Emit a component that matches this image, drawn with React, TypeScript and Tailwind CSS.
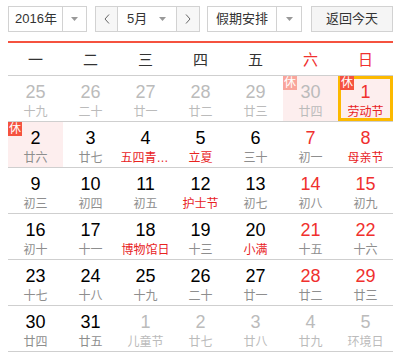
import React from "react";

type Day = {
  n: number;
  lunar: string;
  other?: boolean; // previous / next month
  weekend?: boolean;
  fest?: boolean; // red lunar text
  rest?: boolean; // 休 badge
  today?: boolean;
};

const rows: Day[][] = [
  [
    { n: 25, lunar: "十九", other: true },
    { n: 26, lunar: "二十", other: true },
    { n: 27, lunar: "廿一", other: true },
    { n: 28, lunar: "廿二", other: true },
    { n: 29, lunar: "廿三", other: true },
    { n: 30, lunar: "廿四", other: true, rest: true },
    { n: 1, lunar: "劳动节", weekend: true, fest: true, rest: true, today: true },
  ],
  [
    { n: 2, lunar: "廿六", rest: true },
    { n: 3, lunar: "廿七" },
    { n: 4, lunar: "五四青年节", fest: true },
    { n: 5, lunar: "立夏", fest: true },
    { n: 6, lunar: "三十" },
    { n: 7, lunar: "初一", weekend: true },
    { n: 8, lunar: "母亲节", weekend: true, fest: true },
  ],
  [
    { n: 9, lunar: "初三" },
    { n: 10, lunar: "初四" },
    { n: 11, lunar: "初五" },
    { n: 12, lunar: "护士节", fest: true },
    { n: 13, lunar: "初七" },
    { n: 14, lunar: "初八", weekend: true },
    { n: 15, lunar: "初九", weekend: true },
  ],
  [
    { n: 16, lunar: "初十" },
    { n: 17, lunar: "十一" },
    { n: 18, lunar: "博物馆日", fest: true },
    { n: 19, lunar: "十三" },
    { n: 20, lunar: "小满", fest: true },
    { n: 21, lunar: "十五", weekend: true },
    { n: 22, lunar: "十六", weekend: true },
  ],
  [
    { n: 23, lunar: "十七" },
    { n: 24, lunar: "十八" },
    { n: 25, lunar: "十九" },
    { n: 26, lunar: "二十" },
    { n: 27, lunar: "廿一" },
    { n: 28, lunar: "廿二", weekend: true },
    { n: 29, lunar: "廿三", weekend: true },
  ],
  [
    { n: 30, lunar: "廿四" },
    { n: 31, lunar: "廿五" },
    { n: 1, lunar: "儿童节", other: true },
    { n: 2, lunar: "廿七", other: true },
    { n: 3, lunar: "廿八", other: true },
    { n: 4, lunar: "廿九", other: true },
    { n: 5, lunar: "环境日", other: true },
  ],
];

const weekdays = ["一", "二", "三", "四", "五", "六", "日"];

const Caret = () => (
  <svg width="7" height="4" viewBox="0 0 7 4">
    <path d="M0 0h7L3.5 4z" fill="#999" />
  </svg>
);

const Chevron = ({ dir }: { dir: "l" | "r" }) => (
  <svg width="6" height="10" viewBox="0 0 6 10">
    <path
      d={dir === "l" ? "M5 0.5L1 5l4 4.5" : "M1 0.5L5 5l-4 4.5"}
      fill="none"
      stroke="#666"
      strokeWidth="1"
    />
  </svg>
);

function Cell({ d }: { d: Day }) {
  const numColor = d.other
    ? "text-[#bbb]"
    : d.weekend
    ? "text-[#f0302e]"
    : "text-black";
  const lunarColor = d.other
    ? "text-[#bbb]"
    : d.fest
    ? "text-[#e8231f]"
    : "text-[#8e8e8e]";
  return (
    <div
      className={
        "relative h-[45px] flex flex-col items-center pt-[6px] " +
        (d.rest ? "bg-[#fdeeee]" : "")
      }
    >
      {d.today && (
        <div className="absolute inset-0 border-[3px] border-[#fcb900]" />
      )}
      {d.rest && (
        <span
          className={
            "absolute top-0 w-[14px] h-[14px] flex items-center justify-center text-[12px] leading-none text-white " +
            (d.today ? "left-[2px] " : "left-0 ") +
            (d.other ? "bg-[#f9a59b]" : "bg-[#f5523f]")
          }
        >
          休
        </span>
      )}
      <span
        className={"relative text-[18px] leading-[20px] " + numColor}
        style={{ fontFamily: "Arial, 'Liberation Sans', sans-serif" }}
      >
        {d.n}
      </span>
      <span
        className={
          "relative mt-[2px] max-w-[50px] truncate text-[12px] leading-[16px] " + lunarColor
        }
      >
        {d.lunar}
      </span>
    </div>
  );
}

export default function App() {
  return (
    <div
      className="w-[398px] h-[356px] bg-white overflow-hidden pl-[8px] pt-[6px]"
      style={{ fontFamily: "'Liberation Sans', 'Noto Sans CJK SC', sans-serif" }}
    >
      <div className="w-[385px]">
        {/* toolbar */}
        <div className="flex items-center h-[26px] text-[13px] text-[#333]">
          <div className="flex h-[26px] w-[79px] border border-[#d2d2d2] bg-white">
            <span className="flex-1 flex items-center justify-center pl-[1px]">2016年</span>
            <span className="w-[24px] border-l border-[#d2d2d2] flex items-center justify-center">
              <Caret />
            </span>
          </div>
          <div className="flex h-[26px] w-[105px] ml-[8px] border border-[#d2d2d2] bg-white">
            <span className="w-[22px] bg-[#f7f7f7] border-r border-[#d2d2d2] flex items-center justify-center">
              <Chevron dir="l" />
            </span>
            <span className="flex-1 flex items-center pl-[9px] gap-[12px]">
              5月
              <Caret />
            </span>
            <span className="w-[23px] bg-[#f7f7f7] border-l border-[#d2d2d2] flex items-center justify-center">
              <Chevron dir="r" />
            </span>
          </div>
          <div className="flex h-[26px] w-[95px] ml-[7px] border border-[#d2d2d2] bg-white">
            <span className="flex-1 flex items-center justify-center">假期安排</span>
            <span className="w-[25px] border-l border-[#d2d2d2] flex items-center justify-center">
              <Caret />
            </span>
          </div>
          <div className="h-[26px] w-[82px] ml-[9px] border border-[#d2d2d2] bg-[#f5f5f5] flex items-center justify-center">
            返回今天
          </div>
        </div>

        <div className="mt-[9px] h-[2px] bg-[#f5523f]" />

        {/* weekday header */}
        <div className="grid grid-cols-7 h-[33px] items-center text-[15px] border-b border-[#cfcfcf]">
          {weekdays.map((w, i) => (
            <div
              key={w}
              className={
                "text-center leading-none " + (i >= 5 ? "text-[#f0302e]" : "text-[#333]")
              }
            >
              {w}
            </div>
          ))}
        </div>

        {rows.map((r, ri) => (
          <div key={ri} className="grid grid-cols-7 border-b border-[#cfcfcf]">
            {r.map((d, di) => (
              <Cell key={di} d={d} />
            ))}
          </div>
        ))}
      </div>
    </div>
  );
}
